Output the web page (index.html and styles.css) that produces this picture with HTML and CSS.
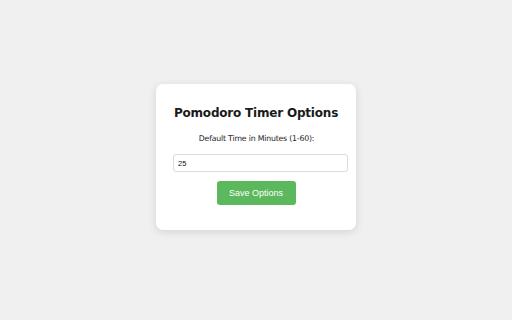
FILE: index.html
```html
<!DOCTYPE html>
<html>
<head>
<meta charset="utf-8">
<link rel="stylesheet" href="styles.css">
</head>
<body>
<div class="page">
  <div class="card">
    <h1 class="title">Pomodoro Timer Options</h1>
    <label class="label" for="time">Default Time in Minutes (1-60):</label>
    <input class="field" id="time" type="number" value="25">
    <div class="actions">
      <button class="save">Save Options</button>
    </div>
  </div>
</div>
</body>
</html>
```

FILE: styles.css
```css
html, body {
  margin: 0;
  padding: 0;
  background: #f0f0f0;
  height: 100%;
}
.page {
  display: flex;
  justify-content: center;
  align-items: flex-start;
  padding-top: 84px;
}
.card {
  box-sizing: border-box;
  width: 200px;
  background: #ffffff;
  border-radius: 7px;
  box-shadow: 0 2px 8px rgba(0, 0, 0, 0.12);
  padding: 17px 17px 25px;
  text-align: center;
  font-family: "DejaVu Sans", Verdana, sans-serif;
}
.title {
  margin: 5px 0 0;
  font-size: 12px;
  line-height: 14px;
  font-weight: bold;
  letter-spacing: -0.2px;
  color: #1a1a1a;
}
.label {
  display: block;
  margin-top: 14px;
  padding-left: 1px;
  font-size: 7.8px;
  line-height: 9px;
  letter-spacing: -0.2px;
  color: #222;
}
.field {
  display: block;
  box-sizing: border-box;
  width: calc(100% + 9px);
  height: 18px;
  margin: 11px 0 0;
  padding: 0 4px;
  border: 1px solid #dcdcdc;
  border-radius: 3px;
  font-family: "Liberation Sans", Arial, sans-serif;
  font-size: 7.5px;
  color: #111;
  text-align: left;
  background: #fff;
  outline: none;
  -moz-appearance: textfield;
}
.field::-webkit-outer-spin-button,
.field::-webkit-inner-spin-button {
  -webkit-appearance: none;
  margin: 0;
}
.actions {
  display: flex;
  justify-content: center;
  margin-top: 9px;
}
.save {
  box-sizing: border-box;
  width: 79px;
  height: 24px;
  padding: 0;
  border: none;
  border-radius: 3px;
  background: #5cb85c;
  color: #ffffff;
  font-family: "Liberation Sans", Arial, sans-serif;
  font-size: 9px;
  cursor: pointer;
}
```
